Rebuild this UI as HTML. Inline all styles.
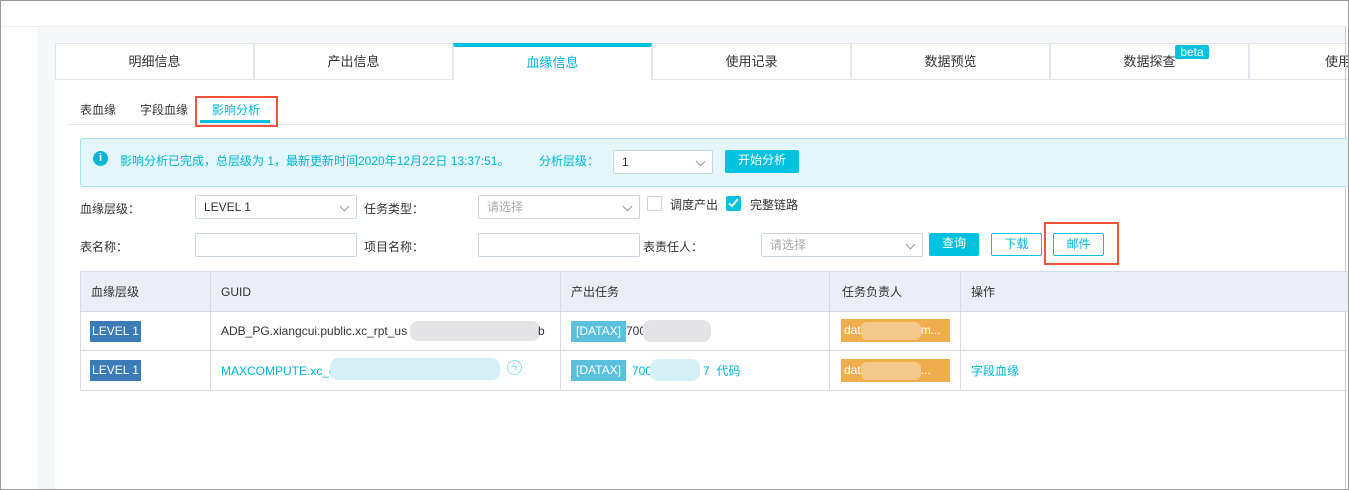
<!DOCTYPE html>
<html><head><meta charset="utf-8"><style>
*{box-sizing:border-box;margin:0;padding:0}
body{width:1349px;height:490px;overflow:hidden;background:#fff;font-family:"Liberation Sans","Noto Sans CJK SC",sans-serif;font-size:12px;color:#333;position:relative}
.a{position:absolute}
.tab{position:absolute;top:43px;height:37px;width:199px;border:1px solid #e2e4ee;background:#fff;text-align:center;line-height:36px;font-size:13px;color:#333;white-space:nowrap;overflow:hidden}
.inp{position:absolute;height:24px;border:1px solid #cfd3de;background:#fff;border-radius:2px;font-size:12px;line-height:22px;padding-left:8px;color:#333}
.arr{position:absolute;right:8px;top:7px;width:7px;height:7px;border-right:1.5px solid #999;border-bottom:1.5px solid #999;transform:rotate(45deg)}
.btn{position:absolute;height:23px;line-height:21px;text-align:center;border-radius:2px;font-size:12px}
.lbl{position:absolute;font-size:12px;color:#333;line-height:14px;white-space:nowrap}
.cell{position:absolute;font-size:12px;line-height:16px;white-space:nowrap}
.blur{position:absolute;border-radius:8px}
</style></head><body>
<div class="a" style="left:0;top:26px;width:1349px;height:1px;background:#ededf0"></div>
<div class="a" style="left:38px;top:27px;width:1307px;height:463px;background:#f6f7f9"></div>
<div class="a" style="left:55px;top:80px;width:1290px;height:410px;background:#fff"></div>
<div class="tab" style="left:55px">明细信息</div>
<div class="tab" style="left:254px">产出信息</div>
<div class="tab" style="left:453px;border-bottom:none;border-top:4px solid #00c1de;line-height:32px;color:#00b5d6">血缘信息</div>
<div class="tab" style="left:652px">使用记录</div>
<div class="tab" style="left:851px">数据预览</div>
<div class="tab" style="left:1050px">数据探查</div>
<div class="tab" style="left:1249px;width:100px;text-align:left;padding-left:75px">使用</div>
<div class="a" style="left:1175px;top:45px;width:34px;height:14px;background:#00c1de;color:#fff;border-radius:2px;font-size:12px;line-height:14px;text-align:center">beta</div>
<div class="a" style="left:1345px;top:27px;width:1px;height:463px;background:#c8c8ce"></div>
<div class="lbl" style="left:80px;top:103px">表血缘</div>
<div class="lbl" style="left:140px;top:103px">字段血缘</div>
<div class="lbl" style="left:212px;top:103px;color:#00b5d6">影响分析</div>
<div class="a" style="left:68px;top:124px;width:1281px;height:1px;background:#e2e4ee"></div>
<div class="a" style="left:200px;top:120px;width:70px;height:3px;background:#00c1de"></div>
<div class="a" style="left:195px;top:96px;width:83px;height:31px;border:2px solid #f0553a"></div>
<div class="a" style="left:80px;top:138px;width:1269px;height:49px;background:#e3f7fb;border:1px solid #a6e4ef;border-radius:3px"></div>
<div class="a" style="left:93px;top:151px;width:15px;height:15px;border-radius:50%;background:#00b5d6;color:#fff;font-size:11px;font-weight:bold;text-align:center;line-height:15px">i</div>
<div class="lbl" style="left:120px;top:154px;color:#00b5d6">影响分析已完成，总层级为 1，最新更新时间2020年12月22日 13:37:51。</div>
<div class="lbl" style="left:539px;top:154px;color:#00b5d6">分析层级：</div>
<div class="inp" style="left:613px;top:150px;width:100px">1<i class="arr"></i></div>
<div class="btn" style="left:725px;top:150px;width:74px;background:#00c1de;color:#fff">开始分析</div>
<div class="lbl" style="left:80px;top:202px">血缘层级：</div>
<div class="inp" style="left:195px;top:195px;width:162px">LEVEL 1<i class="arr"></i></div>
<div class="lbl" style="left:364px;top:202px">任务类型：</div>
<div class="inp" style="left:478px;top:195px;width:162px;color:#aaa">请选择<i class="arr"></i></div>
<div class="a" style="left:647px;top:196px;width:15px;height:15px;border:1px solid #cfd3de;border-radius:2px"></div>
<div class="lbl" style="left:670px;top:198px">调度产出</div>
<div class="a" style="left:726px;top:196px;width:15px;height:15px;background:#00c1de;border-radius:2px"></div>
<div class="a" style="left:731px;top:197px;width:5px;height:10px;border-right:2px solid #fff;border-bottom:2px solid #fff;transform:rotate(40deg)"></div>
<div class="lbl" style="left:750px;top:198px">完整链路</div>
<div class="lbl" style="left:80px;top:240px">表名称：</div>
<div class="inp" style="left:195px;top:233px;width:162px"></div>
<div class="lbl" style="left:364px;top:240px">项目名称：</div>
<div class="inp" style="left:478px;top:233px;width:162px"></div>
<div class="lbl" style="left:643px;top:240px">表责任人：</div>
<div class="inp" style="left:761px;top:233px;width:162px;color:#aaa">请选择<i class="arr"></i></div>
<div class="btn" style="left:929px;top:233px;width:50px;background:#00c1de;color:#fff">查询</div>
<div class="btn" style="left:991px;top:233px;width:51px;border:1px solid #00c1de;color:#00b5d6">下载</div>
<div class="btn" style="left:1053px;top:233px;width:51px;border:1px solid #00c1de;color:#00b5d6">邮件</div>
<div class="a" style="left:1044px;top:222px;width:75px;height:43px;border:2px solid #f0553a"></div>
<div class="a" style="left:80px;top:271px;width:1269px;height:120px;border:1px solid #d6d9e6"></div>
<div class="a" style="left:81px;top:272px;width:1268px;height:39px;background:#ebeef6"></div>
<div class="a" style="left:80px;top:311px;width:1269px;height:1px;background:#d6d9e6"></div>
<div class="a" style="left:80px;top:350px;width:1269px;height:1px;background:#d6d9e6"></div>
<div class="a" style="left:210px;top:271px;width:1px;height:120px;background:#d6d9e6"></div>
<div class="a" style="left:560px;top:271px;width:1px;height:120px;background:#d6d9e6"></div>
<div class="a" style="left:829px;top:271px;width:1px;height:120px;background:#d6d9e6"></div>
<div class="a" style="left:960px;top:271px;width:1px;height:120px;background:#d6d9e6"></div>
<div class="cell" style="left:91px;top:284px">血缘层级</div>
<div class="cell" style="left:221px;top:284px">GUID</div>
<div class="cell" style="left:571px;top:284px">产出任务</div>
<div class="cell" style="left:842px;top:284px">任务负责人</div>
<div class="cell" style="left:971px;top:284px">操作</div>
<div class="cell" style="left:90px;top:321px;width:51px;height:21px;line-height:21px;background:#3b7bb8;color:#fff;text-align:center">LEVEL 1</div>
<div class="cell" style="left:90px;top:360px;width:51px;height:21px;line-height:21px;background:#3b7bb8;color:#fff;text-align:center">LEVEL 1</div>
<div class="cell" style="left:221px;top:323px">ADB_PG.xiangcui.public.xc_rpt_us</div>
<div class="blur" style="left:410px;top:321px;width:130px;height:20px;background:#e4e4e6"></div>
<div class="cell" style="left:538px;top:323px">b</div>
<div class="cell" style="left:221px;top:363px;color:#00b5d6">MAXCOMPUTE.xc_d</div>
<div class="blur" style="left:330px;top:358px;width:170px;height:22px;background:#d5f1f7"></div>
<div class="a" style="left:507px;top:360px;width:15px;height:15px;border:1px solid #8fdcec;border-radius:50%;color:#8fdcec;font-size:10px;text-align:center;line-height:13px">ϟ</div>
<div class="cell" style="left:571px;top:321px;width:55px;height:21px;line-height:21px;background:#5bc0de;color:#fff;text-align:center">[DATAX]</div>
<div class="cell" style="left:626px;top:323px">700</div>
<div class="blur" style="left:643px;top:320px;width:68px;height:22px;background:#e4e4e6"></div>
<div class="cell" style="left:571px;top:360px;width:55px;height:21px;line-height:21px;background:#5bc0de;color:#fff;text-align:center">[DATAX]</div>
<div class="cell" style="left:632px;top:363px;color:#00b5d6">700</div>
<div class="blur" style="left:650px;top:359px;width:50px;height:22px;background:#d5f1f7"></div>
<div class="cell" style="left:703px;top:363px;color:#00b5d6">7&nbsp;&nbsp;代码</div>
<div class="cell" style="left:841px;top:319px;width:109px;height:23px;line-height:23px;background:#f0ad4e;color:#fff;padding-left:3px">dat<span style="display:inline-block;width:60px;height:18px;vertical-align:middle;background:#f5c98c;border-radius:6px"></span>m...</div>
<div class="cell" style="left:841px;top:359px;width:109px;height:23px;line-height:23px;background:#f0ad4e;color:#fff;padding-left:3px">dat<span style="display:inline-block;width:60px;height:18px;vertical-align:middle;background:#f5c98c;border-radius:6px"></span>...</div>
<div class="cell" style="left:971px;top:363px;color:#00b5d6">字段血缘</div>
<div class="a" style="left:0;top:0;width:1349px;height:490px;border:1px solid #9a9a9a"></div>
</body></html>
